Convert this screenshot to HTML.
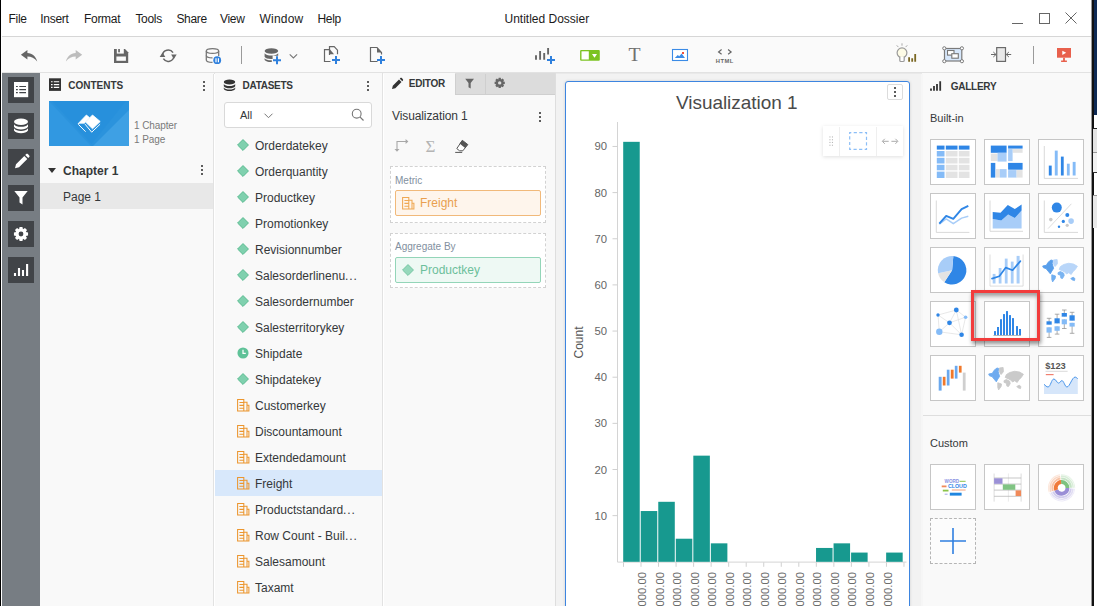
<!DOCTYPE html>
<html><head><meta charset="utf-8"><title>Untitled Dossier</title>
<style>
*{box-sizing:border-box;margin:0;padding:0}
html,body{width:1097px;height:606px;overflow:hidden;background:#fff}
body{position:relative;font-family:"Liberation Sans",sans-serif;color:#35383a;font-size:12px}
.abs,.abs-c>*{position:absolute}
svg{position:absolute;overflow:visible}
#menubar{position:absolute;left:2px;top:0;width:1089px;height:37px;background:#fff;border-bottom:1px solid #d6d6d6}
.mi{position:absolute;top:12.3px;font-size:12px;color:#1b1b1b;line-height:14px;white-space:nowrap;letter-spacing:-0.3px}
#toolbar{position:absolute;left:2px;top:37px;width:1089px;height:36px;background:#fafafa;border-bottom:1px solid #e2e2e2}
#strip{position:absolute;left:2px;top:74px;width:38px;height:532px;background:#777d83}
.sb{position:absolute;left:6px;width:26px;height:26px;background:#414448}
.panel{position:absolute;top:74px;height:532px;background:#f9f9f9}
.ph{position:absolute;font-weight:bold;font-size:10px;color:#35383a;line-height:12px;white-space:nowrap}
.keb{position:absolute;width:2px;height:2px;background:#5c5c5c;box-shadow:0 4px 0 #5c5c5c,0 8px 0 #5c5c5c}
.row{position:absolute;left:0;width:167px;height:26px}
.row span{position:absolute;left:40px;top:6px;font-size:12px;line-height:14px;color:#35383a;white-space:nowrap}
.row svg{left:22px;top:5.5px}
.tile{position:absolute;width:46px;height:46px;background:#fff;border:1px solid #c6c6c6}
.tile svg{left:0;top:0}
.lbl{position:absolute;font-size:10px;color:#8290a0;line-height:12px;white-space:nowrap}
.pill{position:absolute;left:11px;width:146px;height:26px;border-radius:2px}
.pill span{position:absolute;left:24px;top:5px;font-size:12px;line-height:14px}
.pill svg{left:6px;top:5.5px;opacity:.8}
.dash{position:absolute;left:6px;width:156px;border:1px dashed #d2d2d2;background:#fff}
</style></head><body>
<div class="abs" style="left:0;top:0;width:1px;height:606px;background:#000"></div>

<div id="menubar">
<span class="mi" style="left:6.5px">File</span>
<span class="mi" style="left:38.3px">Insert</span>
<span class="mi" style="left:82.0px">Format</span>
<span class="mi" style="left:133.4px">Tools</span>
<span class="mi" style="left:174.4px">Share</span>
<span class="mi" style="left:218.0px">View</span>
<span class="mi" style="left:257.6px;letter-spacing:.2px">Window</span>
<span class="mi" style="left:315.5px">Help</span>
<span class="mi" style="left:502.5px;letter-spacing:0px">Untitled Dossier</span>
<svg style="left:1009px;top:10px" width="70" height="16" viewBox="1011 10 70 16" fill="none" stroke="#666" stroke-width="1">
<path d="M1012 23.5h11"/><rect x="1039.5" y="13.5" width="10" height="10"/><path d="M1065.5 12.5l11 11M1076.5 12.5l-11 11"/></svg>
</div>
<div id="toolbar">

</div>
<div class="abs" style="left:2px;top:73px;width:38px;height:1px;background:#777d83"></div>
<div class="abs" style="left:40px;top:73px;width:516px;height:1px;background:#f9f9f9"></div>
<div class="abs" style="left:455px;top:73px;width:100px;height:1px;background:#dcdcdc"></div>
<div class="abs" style="left:556px;top:73px;width:366px;height:1px;background:#e9e9e9"></div>
<div class="abs" style="left:922px;top:73px;width:169px;height:1px;background:#f9f9f9"></div>
<div class="abs" style="left:214px;top:73px;width:1px;height:1px;background:#e2e2e2"></div>
<div class="abs" style="left:382px;top:73px;width:1px;height:1px;background:#e2e2e2"></div>
<div class="abs" style="left:555px;top:73px;width:1px;height:1px;background:#dedede"></div>

<div id="strip">
<div class="sb" style="top:3px"></div>
<div class="sb" style="top:39px"></div>
<div class="sb" style="top:75px"></div>
<div class="sb" style="top:111px"></div>
<div class="sb" style="top:147px"></div>
<div class="sb" style="top:183px"></div>
</div>
<div class="panel" style="left:40px;width:174px;border-right:1px solid #e2e2e2">

<span class="ph" id="h1" style="left:28.2px;top:6px;letter-spacing:0px">CONTENTS</span>
<div class="keb" style="left:163px;top:7px"></div>
<div class="abs" style="left:9px;top:27px;width:80px;height:45px;background:#2b93dd;overflow:hidden"><svg width="80" height="45" viewBox="49 101 80 45"><path d="M49 101L91 146H49z" fill="#3198e1"/><path d="M129 110L93 146h36z" fill="#3ea0e4"/><path d="M52 101h74L91.500 144z" fill="#2790dc"/><path d="M92.500 115l7.700 6.500l-7.700 7.300l-7-6.800z" fill="#fff" stroke="#fff" stroke-width=".8" stroke-linejoin="round"/><path d="M86.400 115l3 2.500l-4.400 5l-.4.700h-4.800l-1.700.5z" fill="#fff" stroke="#fff" stroke-width=".8" stroke-linejoin="round"/><path d="M78.300 124.300l7.300 7.400M85 124.100l6.700 8.100l8.400-8" fill="none" stroke="#fff" stroke-width="1"/></svg></div>
<span class="abs" style="left:94px;top:46px;font-size:10px;line-height:12px;color:#7a7a7a;letter-spacing:-.1px">1 Chapter</span>
<span class="abs" style="left:94px;top:60px;font-size:10px;line-height:12px;color:#7a7a7a;letter-spacing:-.1px">1 Page</span>
<svg style="left:8px;top:94px" width="8" height="6" viewBox="0 0 8 6"><path d="M0 0h8L4 5z" fill="#333"/></svg>
<span class="abs" style="left:23px;top:90px;font-size:12px;font-weight:bold;line-height:14px;color:#35383a">Chapter 1</span>
<div class="keb" style="left:161px;top:91px"></div>
<div class="abs" style="left:0;top:109px;width:173px;height:26px;background:#e8e8e8"></div>
<span class="abs" style="left:23px;top:116px;font-size:12px;line-height:14px;color:#35383a">Page 1</span>
</div>
<div class="panel" style="left:215px;width:168px;border-right:1px solid #e2e2e2">

<span class="ph" id="h2" style="left:27.6px;top:6px;letter-spacing:-.3px">DATASETS</span>
<div class="keb" style="left:152px;top:7px"></div>
<div class="abs" style="left:9px;top:28px;width:148px;height:26px;background:#fff;border:1px solid #d9d9d9;border-radius:3px"></div>
<span class="abs" style="left:25px;top:35px;font-size:11px;line-height:13px;color:#35383a">All</span>
<svg style="left:49px;top:39px" width="9" height="6" viewBox="0 0 9 6"><path d="M0.5 0.7L4.5 4.7L8.5 0.7" fill="none" stroke="#777" stroke-width="1"/></svg>
<svg style="left:136px;top:34px" width="14" height="14" viewBox="0 0 14 14"><circle cx="5.7" cy="5.7" r="4.4" fill="none" stroke="#777" stroke-width="1.1"/><path d="M8.9 8.9L12.5 12.5" stroke="#777" stroke-width="1.2"/></svg>
<div class="row" style="top:59px"><svg width="12" height="12" viewBox="0 0 13 13"><path d="M6.5 0.6L12.4 6.5L6.5 12.4L0.6 6.5z" fill="#7fd0ae" stroke="#52b78b" stroke-width="1"/></svg><span>Orderdatekey</span></div>
<div class="row" style="top:85px"><svg width="12" height="12" viewBox="0 0 13 13"><path d="M6.5 0.6L12.4 6.5L6.5 12.4L0.6 6.5z" fill="#7fd0ae" stroke="#52b78b" stroke-width="1"/></svg><span>Orderquantity</span></div>
<div class="row" style="top:111px"><svg width="12" height="12" viewBox="0 0 13 13"><path d="M6.5 0.6L12.4 6.5L6.5 12.4L0.6 6.5z" fill="#7fd0ae" stroke="#52b78b" stroke-width="1"/></svg><span>Productkey</span></div>
<div class="row" style="top:137px"><svg width="12" height="12" viewBox="0 0 13 13"><path d="M6.5 0.6L12.4 6.5L6.5 12.4L0.6 6.5z" fill="#7fd0ae" stroke="#52b78b" stroke-width="1"/></svg><span>Promotionkey</span></div>
<div class="row" style="top:163px"><svg width="12" height="12" viewBox="0 0 13 13"><path d="M6.5 0.6L12.4 6.5L6.5 12.4L0.6 6.5z" fill="#7fd0ae" stroke="#52b78b" stroke-width="1"/></svg><span>Revisionnumber</span></div>
<div class="row" style="top:189px"><svg width="12" height="12" viewBox="0 0 13 13"><path d="M6.5 0.6L12.4 6.5L6.5 12.4L0.6 6.5z" fill="#7fd0ae" stroke="#52b78b" stroke-width="1"/></svg><span>Salesorderlinenu<i style="font-style:normal;letter-spacing:.9px">...</i></span></div>
<div class="row" style="top:215px"><svg width="12" height="12" viewBox="0 0 13 13"><path d="M6.5 0.6L12.4 6.5L6.5 12.4L0.6 6.5z" fill="#7fd0ae" stroke="#52b78b" stroke-width="1"/></svg><span>Salesordernumber</span></div>
<div class="row" style="top:241px"><svg width="12" height="12" viewBox="0 0 13 13"><path d="M6.5 0.6L12.4 6.5L6.5 12.4L0.6 6.5z" fill="#7fd0ae" stroke="#52b78b" stroke-width="1"/></svg><span>Salesterritorykey</span></div>
<div class="row" style="top:267px"><svg width="12" height="12" viewBox="0 0 13 13"><circle cx="6.5" cy="6.5" r="6" fill="#5fc298"/><path d="M6.5 3v4h3" fill="none" stroke="#fff" stroke-width="1.3"/></svg><span>Shipdate</span></div>
<div class="row" style="top:293px"><svg width="12" height="12" viewBox="0 0 13 13"><path d="M6.5 0.6L12.4 6.5L6.5 12.4L0.6 6.5z" fill="#7fd0ae" stroke="#52b78b" stroke-width="1"/></svg><span>Shipdatekey</span></div>
<div class="row" style="top:319px"><svg width="12.5" height="12.7" viewBox="0 0 12.5 12.7" fill="none" stroke="#ec962e" stroke-width="1.05"><path d="M.6 .6H6.8V12.1H.6zM6.8 3.3H10V12.1M10 6.3H11.9V12.1H6.8M2.4 3.5H6.8M2.4 6.4H6.8M2.4 9.3H6.8"/></svg><span>Customerkey</span></div>
<div class="row" style="top:345px"><svg width="12.5" height="12.7" viewBox="0 0 12.5 12.7" fill="none" stroke="#ec962e" stroke-width="1.05"><path d="M.6 .6H6.8V12.1H.6zM6.8 3.3H10V12.1M10 6.3H11.9V12.1H6.8M2.4 3.5H6.8M2.4 6.4H6.8M2.4 9.3H6.8"/></svg><span>Discountamount</span></div>
<div class="row" style="top:371px"><svg width="12.5" height="12.7" viewBox="0 0 12.5 12.7" fill="none" stroke="#ec962e" stroke-width="1.05"><path d="M.6 .6H6.8V12.1H.6zM6.8 3.3H10V12.1M10 6.3H11.9V12.1H6.8M2.4 3.5H6.8M2.4 6.4H6.8M2.4 9.3H6.8"/></svg><span>Extendedamount</span></div>
<div class="abs" style="left:0;top:396px;width:167px;height:26px;background:#d8e8fb"></div>
<div class="row" style="top:397px"><svg width="12.5" height="12.7" viewBox="0 0 12.5 12.7" fill="none" stroke="#ec962e" stroke-width="1.05"><path d="M.6 .6H6.8V12.1H.6zM6.8 3.3H10V12.1M10 6.3H11.9V12.1H6.8M2.4 3.5H6.8M2.4 6.4H6.8M2.4 9.3H6.8"/></svg><span>Freight</span></div>
<div class="row" style="top:423px"><svg width="12.5" height="12.7" viewBox="0 0 12.5 12.7" fill="none" stroke="#ec962e" stroke-width="1.05"><path d="M.6 .6H6.8V12.1H.6zM6.8 3.3H10V12.1M10 6.3H11.9V12.1H6.8M2.4 3.5H6.8M2.4 6.4H6.8M2.4 9.3H6.8"/></svg><span>Productstandard<i style="font-style:normal;letter-spacing:.9px">...</i></span></div>
<div class="row" style="top:449px"><svg width="12.5" height="12.7" viewBox="0 0 12.5 12.7" fill="none" stroke="#ec962e" stroke-width="1.05"><path d="M.6 .6H6.8V12.1H.6zM6.8 3.3H10V12.1M10 6.3H11.9V12.1H6.8M2.4 3.5H6.8M2.4 6.4H6.8M2.4 9.3H6.8"/></svg><span>Row Count - Buil<i style="font-style:normal;letter-spacing:.9px">...</i></span></div>
<div class="row" style="top:475px"><svg width="12.5" height="12.7" viewBox="0 0 12.5 12.7" fill="none" stroke="#ec962e" stroke-width="1.05"><path d="M.6 .6H6.8V12.1H.6zM6.8 3.3H10V12.1M10 6.3H11.9V12.1H6.8M2.4 3.5H6.8M2.4 6.4H6.8M2.4 9.3H6.8"/></svg><span>Salesamount</span></div>
<div class="row" style="top:501px"><svg width="12.5" height="12.7" viewBox="0 0 12.5 12.7" fill="none" stroke="#ec962e" stroke-width="1.05"><path d="M.6 .6H6.8V12.1H.6zM6.8 3.3H10V12.1M10 6.3H11.9V12.1H6.8M2.4 3.5H6.8M2.4 6.4H6.8M2.4 9.3H6.8"/></svg><span>Taxamt</span></div>
</div>
<div class="panel" style="left:384px;width:172px;border-right:1px solid #dedede">
<div class="abs" style="left:71px;top:0;width:100px;height:21px;background:#dcdcdc;border-bottom:1px solid #cfcfcf;border-left:1px solid #cfcfcf"></div>
<div class="abs" style="left:101px;top:0;width:1px;height:21px;background:#cfcfcf"></div>

<span class="ph" id="h3" style="left:24.7px;top:4px;letter-spacing:-.2px">EDITOR</span>
<span class="abs" style="left:8px;top:35px;font-size:12px;line-height:14px;color:#35383a;letter-spacing:-.1px">Visualization 1</span>
<div class="keb" style="left:155px;top:38px"></div>
<div class="dash" style="top:92px;height:57px"></div>
<span class="lbl" style="left:11px;top:100.5px">Metric</span>
<div class="pill" style="top:116px;background:#fef5ec;border:1px solid #f1b97a"><svg width="12.5" height="12.7" viewBox="0 0 12.5 12.7" fill="none" stroke="#ec962e" stroke-width="1.05"><path d="M.6 .6H6.8V12.1H.6zM6.8 3.3H10V12.1M10 6.3H11.9V12.1H6.8M2.4 3.5H6.8M2.4 6.4H6.8M2.4 9.3H6.8"/></svg><span style="color:#e9a04f">Freight</span></div>
<div class="dash" style="top:159px;height:55px"></div>
<span class="lbl" style="left:11px;top:167px">Aggregate By</span>
<div class="pill" style="top:183px;background:#eef9f4;border:1px solid #93d5b8"><svg width="12" height="12" viewBox="0 0 13 13"><path d="M6.5 0.6L12.4 6.5L6.5 12.4L0.6 6.5z" fill="#7fd0ae" stroke="#52b78b" stroke-width="1"/></svg><span style="color:#6cc09b">Productkey</span></div>
</div>
<div class="abs" style="left:556px;top:74px;width:366px;height:532px;background:#f2f2f2"></div>
<div class="abs" style="left:565px;top:81px;width:345px;height:540px;background:#fff;border:1px solid #3d85e0;border-radius:3px;box-shadow:0 0 3px rgba(0,0,0,.15)"></div>
<span class="abs" style="left:676px;top:92px;font-size:19px;line-height:22px;color:#4a4a4a;white-space:nowrap;letter-spacing:-.05px">Visualization 1</span>
<div class="abs" style="left:887px;top:84px;width:16px;height:16px;background:#fff;border:1px solid #dcdcdc;border-radius:2px"></div>
<div class="keb" style="left:894px;top:87px"></div>
<div class="abs" style="left:823px;top:126px;width:80px;height:30px;background:#fff;box-shadow:0 1px 4px rgba(0,0,0,.13)"></div>
<svg style="left:0;top:0" width="1097" height="606" viewBox="0 0 1097 606"><path d="M839.500 127v29M876.500 127v29" stroke="#efefef" stroke-width="1"/><g fill="#b8b8b8"><rect x="829.400" y="136.400" width="1.100" height="1.100"/><rect x="831.900" y="136.400" width="1.100" height="1.100"/><rect x="829.400" y="139.200" width="1.100" height="1.100"/><rect x="831.900" y="139.200" width="1.100" height="1.100"/><rect x="829.400" y="141.900" width="1.100" height="1.100"/><rect x="831.900" y="141.900" width="1.100" height="1.100"/><rect x="829.400" y="144.700" width="1.100" height="1.100"/><rect x="831.900" y="144.700" width="1.100" height="1.100"/></g><rect x="849.700" y="132.700" width="16.800" height="16.600" fill="none" stroke="#8cbef7" stroke-width="1.200" stroke-dasharray="3.200 2.400" stroke-dashoffset="1.600"/><path d="M888.700 141.300h-6M884.800 138.800l-2.500 2.500l2.500 2.500M891.400 141.300h6M895.400 138.800l2.500 2.500l-2.500 2.500" fill="none" stroke="#ababab" stroke-width="1"/></svg>
<svg style="left:0;top:0" width="1097" height="606" viewBox="0 0 1097 606"><path d="M617.5 122V562.0999999999999H906.5" fill="none" stroke="#d4d4d4" stroke-width="1"/><rect x="623.20" y="141.83" width="16.53" height="419.97" fill="#17998f"/><rect x="640.73" y="511.03" width="16.53" height="50.77" fill="#17998f"/><rect x="658.26" y="501.80" width="16.53" height="60.00" fill="#17998f"/><rect x="675.79" y="538.72" width="16.53" height="23.08" fill="#17998f"/><rect x="693.32" y="455.65" width="16.53" height="106.15" fill="#17998f"/><rect x="710.85" y="543.34" width="16.53" height="18.46" fill="#17998f"/><rect x="816.03" y="547.95" width="16.53" height="13.85" fill="#17998f"/><rect x="833.56" y="543.34" width="16.53" height="18.46" fill="#17998f"/><rect x="851.09" y="552.57" width="16.53" height="9.23" fill="#17998f"/><rect x="886.15" y="552.57" width="16.53" height="9.23" fill="#17998f"/><path d="M623.50 562.3v4.5M641.03 562.3v4.5M658.56 562.3v4.5M676.09 562.3v4.5M693.62 562.3v4.5M711.15 562.3v4.5M728.68 562.3v4.5M746.21 562.3v4.5M763.74 562.3v4.5M781.27 562.3v4.5M798.80 562.3v4.5M816.33 562.3v4.5M833.86 562.3v4.5M851.39 562.3v4.5M868.92 562.3v4.5M886.45 562.3v4.5M903.98 562.3v4.5M612.5 515.65h5M612.5 469.50h5M612.5 423.35h5M612.5 377.20h5M612.5 331.05h5M612.5 284.90h5M612.5 238.75h5M612.5 192.60h5M612.5 146.45h5" stroke="#d0d0d0" stroke-width="1" fill="none"/><text x="607" y="519.6" text-anchor="end" font-size="11.3" fill="#666">10</text><text x="607" y="473.5" text-anchor="end" font-size="11.3" fill="#666">20</text><text x="607" y="427.3" text-anchor="end" font-size="11.3" fill="#666">30</text><text x="607" y="381.2" text-anchor="end" font-size="11.3" fill="#666">40</text><text x="607" y="335.0" text-anchor="end" font-size="11.3" fill="#666">50</text><text x="607" y="288.9" text-anchor="end" font-size="11.3" fill="#666">60</text><text x="607" y="242.7" text-anchor="end" font-size="11.3" fill="#666">70</text><text x="607" y="196.6" text-anchor="end" font-size="11.3" fill="#666">80</text><text x="607" y="150.4" text-anchor="end" font-size="11.3" fill="#666">90</text><text transform="translate(583.4,342.5) rotate(-90)" text-anchor="middle" font-size="12" fill="#555">Count</text><text transform="translate(646.0,572) rotate(-90)" text-anchor="end" font-size="11.3" fill="#6c6c6c">1,000,000.00</text><text transform="translate(663.6,572) rotate(-90)" text-anchor="end" font-size="11.3" fill="#6c6c6c">2,000,000.00</text><text transform="translate(681.1,572) rotate(-90)" text-anchor="end" font-size="11.3" fill="#6c6c6c">3,000,000.00</text><text transform="translate(698.6,572) rotate(-90)" text-anchor="end" font-size="11.3" fill="#6c6c6c">4,000,000.00</text><text transform="translate(716.1,572) rotate(-90)" text-anchor="end" font-size="11.3" fill="#6c6c6c">5,000,000.00</text><text transform="translate(733.7,572) rotate(-90)" text-anchor="end" font-size="11.3" fill="#6c6c6c">6,000,000.00</text><text transform="translate(751.2,572) rotate(-90)" text-anchor="end" font-size="11.3" fill="#6c6c6c">7,000,000.00</text><text transform="translate(768.7,572) rotate(-90)" text-anchor="end" font-size="11.3" fill="#6c6c6c">8,000,000.00</text><text transform="translate(786.3,572) rotate(-90)" text-anchor="end" font-size="11.3" fill="#6c6c6c">9,000,000.00</text><text transform="translate(803.8,572) rotate(-90)" text-anchor="end" font-size="11.3" fill="#6c6c6c">10,000,000.00</text><text transform="translate(821.3,572) rotate(-90)" text-anchor="end" font-size="11.3" fill="#6c6c6c">11,000,000.00</text><text transform="translate(838.9,572) rotate(-90)" text-anchor="end" font-size="11.3" fill="#6c6c6c">12,000,000.00</text><text transform="translate(856.4,572) rotate(-90)" text-anchor="end" font-size="11.3" fill="#6c6c6c">13,000,000.00</text><text transform="translate(873.9,572) rotate(-90)" text-anchor="end" font-size="11.3" fill="#6c6c6c">14,000,000.00</text><text transform="translate(891.5,572) rotate(-90)" text-anchor="end" font-size="11.3" fill="#6c6c6c">15,000,000.00</text></svg>
<div class="abs" style="left:921px;top:74px;width:2px;height:532px;background:#f6f6f6"></div>
<div class="panel" style="left:923px;width:168px">

<span class="ph" id="h4" style="left:27.7px;top:7px;letter-spacing:-.25px">GALLERY</span>
<span class="abs" style="left:7px;top:38px;font-size:11px;line-height:13px;color:#35383a">Built-in</span>
<div class="tile" style="left:7px;top:65px"><svg width="44" height="44" viewBox="1 1 44 44"><rect x="6.8" y="6.6" width="7.7" height="4.0" fill="#2f86e6"/><rect x="15.8" y="6.6" width="11.7" height="4.0" fill="#2f86e6"/><rect x="28.8" y="6.6" width="10.7" height="4.0" fill="#2f86e6"/><rect x="6.8" y="12.0" width="7.7" height="5.5" fill="#84bbf7"/><rect x="15.8" y="12.0" width="11.7" height="5.5" fill="#e3e3e3"/><rect x="28.8" y="12.0" width="10.7" height="5.5" fill="#e3e3e3"/><rect x="6.8" y="18.8" width="7.7" height="5.7" fill="#84bbf7"/><rect x="15.8" y="18.8" width="11.7" height="5.7" fill="#e3e3e3"/><rect x="28.8" y="18.8" width="10.7" height="5.7" fill="#e3e3e3"/><rect x="6.8" y="25.8" width="7.7" height="5.5" fill="#84bbf7"/><rect x="15.8" y="25.8" width="11.7" height="5.5" fill="#e3e3e3"/><rect x="28.8" y="25.8" width="10.7" height="5.5" fill="#e3e3e3"/><rect x="6.8" y="32.6" width="7.7" height="6.4" fill="#84bbf7"/><rect x="15.8" y="32.6" width="11.7" height="6.4" fill="#e3e3e3"/><rect x="28.8" y="32.6" width="10.7" height="6.4" fill="#e3e3e3"/></svg></div>
<div class="tile" style="left:61px;top:65px"><svg width="44" height="44" viewBox="1 1 44 44"><rect x="6.8" y="6.6" width="15.8" height="7.2" fill="#2f86e6"/><rect x="24.1" y="6.6" width="14.5" height="3.0" fill="#2f86e6"/><rect x="28.6" y="10.1" width="10.0" height="3.7" fill="#e3e3e3"/><rect x="24.1" y="10.1" width="4.5" height="12.0" fill="#a8cdf8"/><rect x="6.8" y="14.6" width="6.7" height="7.5" fill="#e3e3e3"/><rect x="13.5" y="13.8" width="9.1" height="8.8" fill="#a8cdf8"/><rect x="6.8" y="23.9" width="4.5" height="14.7" fill="#2f86e6"/><rect x="12.0" y="30.1" width="3.8" height="8.5" fill="#e3e3e3"/><rect x="15.8" y="30.1" width="6.8" height="8.5" fill="#a8cdf8"/><rect x="24.1" y="23.9" width="14.5" height="6.8" fill="#2f86e6"/><rect x="24.1" y="31.1" width="8.5" height="7.5" fill="#a8cdf8"/><rect x="32.6" y="31.1" width="6.0" height="7.5" fill="#e3e3e3"/></svg></div>
<div class="tile" style="left:115px;top:65px"><svg width="44" height="44" viewBox="1 1 44 44"><path d="M6.3 7V39.4H40" fill="none" stroke="#cfcfcf" stroke-width=".8"/><rect x="10.8" y="26.6" width="2.9" height="9.9" fill="#2f86e6"/><rect x="16.8" y="11.6" width="2.9" height="24.9" fill="#84bbf7"/><rect x="22.9" y="17.6" width="2.8" height="18.9" fill="#2f86e6"/><rect x="28.9" y="24.7" width="2.8" height="11.8" fill="#84bbf7"/><rect x="34.7" y="22.9" width="2.9" height="13.6" fill="#84bbf7"/></svg></div>
<div class="tile" style="left:7px;top:119px"><svg width="44" height="44" viewBox="1 1 44 44"><path d="M6.3 7.5V39.4H39.4" fill="none" stroke="#cfcfcf" stroke-width=".8"/><path d="M9.3 31.1L16.2 25.9L23.3 30.7L31.6 25.1L38.3 23.3" fill="none" stroke="#a8cdf8" stroke-width="1.5" stroke-linejoin="round"/><path d="M9.3 30.7L16.2 22.9L23.3 25.9L31.6 16.1L38.3 12.8" fill="none" stroke="#2f86e6" stroke-width="1.9" stroke-linejoin="round"/></svg></div>
<div class="tile" style="left:61px;top:119px"><svg width="44" height="44" viewBox="1 1 44 44"><path d="M6 7.5V38.3H39" fill="none" stroke="#cfcfcf" stroke-width=".8"/><path d="M8.7 25.9L17.3 27.4L24.1 21.4L30.8 25.1L37.6 17.6V35.6H8.7z" fill="#a8cdf8"/><path d="M8.7 19.1L16.5 19.8L23.8 12L30.8 16.1L37.6 11.6V17.6L30.8 25.1L24.1 21.4L17.3 27.4L8.7 25.9z" fill="#2f86e6"/></svg></div>
<div class="tile" style="left:115px;top:119px"><svg width="44" height="44" viewBox="1 1 44 44"><path d="M6.3 7.5V39.4H40" fill="none" stroke="#cfcfcf" stroke-width=".8"/><path d="M10.1 35.6L33.4 10.8" stroke="#c4c4c4" stroke-width=".6"/><circle cx="18.8" cy="14.6" r="5" fill="#2f86e6"/><circle cx="12.8" cy="26.6" r="1.8" fill="#c9c9c9"/><circle cx="29.3" cy="22.1" r="2" fill="#2f86e6"/><circle cx="25.3" cy="28.4" r="1.6" fill="#2f86e6"/><circle cx="33.1" cy="28.1" r="2.8" fill="#a8cdf8"/><circle cx="29.2" cy="32.3" r="1.6" fill="#c9c9c9"/><circle cx="21" cy="33.8" r="1.2" fill="#2f86e6"/></svg></div>
<div class="tile" style="left:7px;top:173px"><svg width="44" height="44" viewBox="1 1 44 44"><path d="M22.1 23.2L23.35 8.95A14.3 14.3 0 1 1 14.31 35.19z" fill="#2f86e6"/><path d="M22.1 23.2L14.31 35.19A14.3 14.3 0 0 1 8.11 26.17z" fill="#e3e3e3"/><path d="M22.1 23.2L8.11 26.17A14.3 14.3 0 0 1 23.35 8.95z" fill="#a8cdf8"/></svg></div>
<div class="tile" style="left:61px;top:173px"><svg width="44" height="44" viewBox="1 1 44 44"><path d="M6 7.5V39.1H39.1V7.5" fill="none" stroke="#cfcfcf" stroke-width=".7"/><rect x="8.7" y="26.9" width="2.8" height="9.6" fill="#a8cdf8"/><rect x="14.7" y="21.0" width="2.8" height="15.5" fill="#a8cdf8"/><rect x="20.8" y="11.6" width="2.8" height="24.9" fill="#a8cdf8"/><rect x="26.8" y="14.6" width="2.8" height="21.9" fill="#a8cdf8"/><rect x="32.6" y="8.9" width="3.0" height="27.6" fill="#a8cdf8"/><path d="M8 31.6L15.3 29.2L21.8 20.6L28.6 23.2L36.4 14.1" fill="none" stroke="#2f86e6" stroke-width="1.7" stroke-linejoin="round" stroke-linecap="round"/></svg></div>
<div class="tile" style="left:115px;top:173px"><svg width="44" height="44" viewBox="1 1 44 44"><path d="M4.7 19L8.4 18.3L10 15.4L13 13L14.6 13.4L14.2 16.7L15.6 21.4L13.8 24.1L12.3 26.8L10.1 24.1L8 21.6L5.5 20.8z" fill="#2f86e6" stroke="#2f86e6" stroke-width=".9" stroke-linejoin="round" opacity=".8"/><path d="M15.4 13L19.1 12.5L19.4 16.7L17.1 19.5L15.4 16.7z" fill="#a8cdf8" stroke="#a8cdf8" stroke-width=".9" stroke-linejoin="round" opacity=".8"/><path d="M13.8 27.8L17.5 29L17.1 31.5L14.6 34.9L13.8 32.3z" fill="#4d9aec" stroke="#4d9aec" stroke-width=".9" stroke-linejoin="round" opacity=".8"/><path d="M20 25.7L22.4 24.5L25.7 26.2L26.2 28.6L24.5 31.5L22.9 31.1L22.4 28.2L20.1 27.4z" fill="#5aa2ee" stroke="#5aa2ee" stroke-width=".9" stroke-linejoin="round" opacity=".8"/><path d="M21.2 22.4L22.4 19.6L25.7 17.5L30.7 16.3L35.6 17.1L39.4 19.3L37.3 22.4L34.8 24.9L33.2 27.4L30.7 25.7L28.6 27L26.6 24.9L24.1 23.7z" fill="#a8cdf8" stroke="#a8cdf8" stroke-width=".9" stroke-linejoin="round" opacity=".8"/><path d="M32.8 31.5L35.2 30.3L36.9 31.5L36.5 33.6L34 32.8z" fill="#4d9aec" stroke="#4d9aec" stroke-width=".9" stroke-linejoin="round" opacity=".8"/></svg></div>
<div class="tile" style="left:7px;top:227px"><svg width="44" height="44" viewBox="1 1 44 44"><path d="M26.3 9L8 14" stroke="#dedede" stroke-width=".7"/><path d="M26.3 9L35.6 16.2" stroke="#dedede" stroke-width=".7"/><path d="M26.3 9L19.5 21.8" stroke="#dedede" stroke-width=".7"/><path d="M26.3 9L31.6 33.8" stroke="#dedede" stroke-width=".7"/><path d="M8 14L19.5 21.8" stroke="#dedede" stroke-width=".7"/><path d="M8 14L9.3 30.8" stroke="#dedede" stroke-width=".7"/><path d="M35.6 16.2L19.5 21.8" stroke="#dedede" stroke-width=".7"/><path d="M35.6 16.2L31.6 33.8" stroke="#dedede" stroke-width=".7"/><path d="M19.5 21.8L9.3 30.8" stroke="#dedede" stroke-width=".7"/><path d="M19.5 21.8L31.6 33.8" stroke="#dedede" stroke-width=".7"/><path d="M9.3 30.8L31.6 33.8" stroke="#dedede" stroke-width=".7"/><circle cx="26.3" cy="9" r="2.4" fill="#2f86e6"/><circle cx="8" cy="14" r="1.7" fill="#2f86e6"/><circle cx="35.6" cy="16.2" r="1.8" fill="#84bbf7"/><circle cx="19.5" cy="21.8" r="2.4" fill="#2f86e6"/><circle cx="9.3" cy="30.8" r="3.2" fill="#84bbf7"/><circle cx="31.6" cy="33.8" r="2.3" fill="#2f86e6"/></svg></div>
<div class="tile" style="left:61px;top:227px"><svg width="44" height="44" viewBox="1 1 44 44"><path d="M9.4 34.5H37" stroke="#aaa" stroke-width=".8"/><rect x="10.0" y="30.1" width="2.0" height="4.0" fill="#2f86e6"/><rect x="13.0" y="26.0" width="2.0" height="8.1" fill="#2f86e6"/><rect x="16.0" y="18.2" width="2.0" height="15.9" fill="#2f86e6"/><rect x="19.0" y="13.1" width="2.0" height="21.0" fill="#2f86e6"/><rect x="22.0" y="10.1" width="2.0" height="24.0" fill="#2f86e6"/><rect x="25.0" y="14.1" width="2.0" height="20.0" fill="#2f86e6"/><rect x="28.0" y="17.1" width="2.0" height="17.0" fill="#2f86e6"/><rect x="32.0" y="25.1" width="2.0" height="9.0" fill="#2f86e6"/><rect x="35.0" y="28.0" width="2.0" height="6.1" fill="#2f86e6"/></svg></div>
<div class="tile" style="left:115px;top:227px"><svg width="44" height="44" viewBox="1 1 44 44"><path d="M11.1 17.3V36.4M8.8 17.3h4.6M8.8 36.4h4.6" stroke="#8a8a8a" stroke-width=".7" fill="none"/><rect x="8.5" y="20.3" width="5.2" height="3.5" fill="#2f86e6"/><rect x="8.5" y="23.8" width="5.2" height="2.5" fill="#fff"/><rect x="8.5" y="26.3" width="5.2" height="5.3" fill="#84bbf7"/><path d="M19.1 13.2V33.1M16.8 13.2h4.6M16.8 33.1h4.6" stroke="#8a8a8a" stroke-width=".7" fill="none"/><rect x="16.5" y="17.3" width="5.2" height="5.3" fill="#2f86e6"/><rect x="16.5" y="22.6" width="5.2" height="2.7" fill="#fff"/><rect x="16.5" y="25.3" width="5.2" height="4.5" fill="#84bbf7"/><path d="M26.3 9V27.5M24.0 9h4.6M24.0 27.5h4.6" stroke="#8a8a8a" stroke-width=".7" fill="none"/><rect x="23.7" y="12.0" width="5.2" height="3.8" fill="#2f86e6"/><rect x="23.7" y="15.8" width="5.2" height="2.5" fill="#fff"/><rect x="23.7" y="18.3" width="5.2" height="5.0" fill="#84bbf7"/><path d="M34.1 11.3V32.3M31.8 11.3h4.6M31.8 32.3h4.6" stroke="#8a8a8a" stroke-width=".7" fill="none"/><rect x="31.5" y="14.3" width="5.2" height="5.5" fill="#2f86e6"/><rect x="31.5" y="19.8" width="5.2" height="2.0" fill="#fff"/><rect x="31.5" y="21.8" width="5.2" height="3.8" fill="#84bbf7"/></svg></div>
<div class="tile" style="left:7px;top:281px"><svg width="44" height="44" viewBox="1 1 44 44"><rect x="8.7" y="21.8" width="2.9" height="13.8" fill="#6aa8ee"/><rect x="12.8" y="21.8" width="2.7" height="8.7" fill="#f0782a"/><rect x="16.8" y="14.7" width="2.7" height="15.8" fill="#6aa8ee"/><rect x="20.8" y="14.7" width="2.8" height="8.9" fill="#f0782a"/><rect x="24.8" y="10.8" width="2.7" height="12.8" fill="#6aa8ee"/><rect x="28.9" y="10.8" width="2.7" height="6.8" fill="#f0782a"/><rect x="32.8" y="17.6" width="2.8" height="18.0" fill="#cfcfcf"/></svg></div>
<div class="tile" style="left:61px;top:281px"><svg width="44" height="44" viewBox="1 1 44 44"><path d="M4.7 19L8.4 18.3L10 15.4L13 13L14.6 13.4L14.2 16.7L15.6 21.4L13.8 24.1L12.3 26.8L10.1 24.1L8 21.6L5.5 20.8z" fill="#4a96ec" stroke="#4a96ec" stroke-width=".9" stroke-linejoin="round" opacity=".8"/><path d="M15.4 13L19.1 12.5L19.4 16.7L17.1 19.5L15.4 16.7z" fill="#bdbdbd" stroke="#bdbdbd" stroke-width=".9" stroke-linejoin="round" opacity=".8"/><path d="M13.8 27.8L17.5 29L17.1 31.5L14.6 34.9L13.8 32.3z" fill="#bdbdbd" stroke="#bdbdbd" stroke-width=".9" stroke-linejoin="round" opacity=".8"/><path d="M20 25.7L22.4 24.5L25.7 26.2L26.2 28.6L24.5 31.5L22.9 31.1L22.4 28.2L20.1 27.4z" fill="#bdbdbd" stroke="#bdbdbd" stroke-width=".9" stroke-linejoin="round" opacity=".8"/><path d="M21.2 22.4L22.4 19.6L25.7 17.5L30.7 16.3L35.6 17.1L39.4 19.3L37.3 22.4L34.8 24.9L33.2 27.4L30.7 25.7L28.6 27L26.6 24.9L24.1 23.7z" fill="#bdbdbd" stroke="#bdbdbd" stroke-width=".9" stroke-linejoin="round" opacity=".8"/><path d="M32.8 31.5L35.2 30.3L36.9 31.5L36.5 33.6L34 32.8z" fill="#bdbdbd" stroke="#bdbdbd" stroke-width=".9" stroke-linejoin="round" opacity=".8"/></svg></div>
<div class="tile" style="left:115px;top:281px"><svg width="44" height="44" viewBox="1 1 44 44"><text x="7.300" y="13.800" font-size="9.300" font-weight="bold" fill="#555" letter-spacing="-.1">$123</text><path d="M7.500 16.300H29.600" stroke="#c8c8c8" stroke-width=".7"/><path d="M7.800 19.600H15.600" stroke="#f08070" stroke-width="1.200"/><path d="M6 29.300C7.500 30.500 8.500 32 10 32C12.500 32 13.500 24 15.800 24C18 24 18.800 28.100 20.600 28.100C22 28.100 22.600 25.600 23.900 25.600C25.800 25.600 27 32 28.900 32C31.800 32 34 22.100 37.100 22.100C38.200 22.100 39 23 39.800 24V39.100H6z" fill="#d6e6fa"/><path d="M6 29.300C7.500 30.500 8.500 32 10 32C12.500 32 13.500 24 15.800 24C18 24 18.800 28.100 20.600 28.100C22 28.100 22.600 25.600 23.900 25.600C25.800 25.600 27 32 28.900 32C31.800 32 34 22.100 37.100 22.100C38.200 22.100 39 23 39.800 24" fill="none" stroke="#4a96ec" stroke-width="1"/></svg></div>
<div class="abs" style="left:0;top:341px;width:168px;height:1px;background:#dedede"></div>
<span class="abs" style="left:7px;top:363px;font-size:11px;line-height:13px;color:#35383a">Custom</span>
<div class="tile" style="left:7px;top:390px"><svg width="44" height="44" viewBox="1 1 44 44"><text x="14.600" y="18.600" font-size="4.600" font-weight="bold" fill="#8a90e2">WORD</text><path d="M29.600 17.300H35.600" stroke="#8bc34a" stroke-width="1"/><rect x="11.7" y="21.5" width="4.8" height="1.8" fill="#f08a5a"/><text x="17.900" y="23.900" font-size="5.300" font-weight="bold" fill="#2f86e6">CLOUD</text><rect x="12.8" y="25.7" width="5.7" height="1.8" fill="#8bc34a"/><path d="M21.800 26H35.600" stroke="#f08a5a" stroke-width=".8"/><path d="M14.700 30.200H17.600" stroke="#8a90e2" stroke-width=".8"/><rect x="19.8" y="28.7" width="11.8" height="2.9" fill="#1f86e0"/></svg></div>
<div class="tile" style="left:61px;top:390px"><svg width="44" height="44" viewBox="1 1 44 44"><path d="M10.100 9.500V37.600M37.100 9.500V37.600" stroke="#c4c4c4" stroke-width=".6"/><path d="M24.400 9.500V37.600" stroke="#dcdcdc" stroke-width=".6"/><path d="M10.100 14H37.100M10.100 20.100H37.100M10.100 26.100H37.100M10.100 32.300H37.100" stroke="#b0b0b0" stroke-width=".7"/><rect x="10.1" y="14.3" width="8.4" height="5.5" fill="#9b90d6"/><rect x="18.8" y="20.4" width="12.5" height="5.4" fill="#80c483"/><rect x="31.6" y="26.4" width="5.5" height="5.6" fill="#f08a5a"/></svg></div>
<div class="tile" style="left:115px;top:390px"><svg width="44" height="44" viewBox="1 1 44 44"><path d="M22.92 16.03A7.8 7.8 0 0 1 31.40 24.07L27.50 23.94A3.9 3.9 0 0 0 23.26 19.91z" fill="#7ec27f" fill-opacity="1"/><path d="M23.06 13.51A10.3 10.3 0 0 1 33.90 23.80L31.90 23.80A8.3 8.3 0 0 0 23.17 15.51z" fill="#7ec27f" fill-opacity="0.45"/><path d="M22.96 11.62A12.2 12.2 0 0 1 35.80 23.80L34.30 23.80A10.7 10.7 0 0 0 23.04 13.11z" fill="#7ec27f" fill-opacity="0.3"/><path d="M22.89 10.22A13.6 13.6 0 0 1 37.20 23.80L36.20 23.80A12.6 12.6 0 0 0 22.94 11.22z" fill="#7ec27f" fill-opacity="0.18"/><path d="M31.40 24.07A7.8 7.8 0 0 1 16.37 26.72L19.98 25.26A3.9 3.9 0 0 0 27.50 23.94z" fill="#9a8ed6" fill-opacity="1"/><path d="M33.87 24.52A10.3 10.3 0 0 1 14.19 27.99L16.02 27.18A8.3 8.3 0 0 0 31.88 24.38z" fill="#9a8ed6" fill-opacity="0.45"/><path d="M35.77 24.65A12.2 12.2 0 0 1 12.45 28.76L13.83 28.15A10.7 10.7 0 0 0 34.27 24.55z" fill="#9a8ed6" fill-opacity="0.3"/><path d="M37.17 24.75A13.6 13.6 0 0 1 11.18 29.33L12.09 28.92A12.6 12.6 0 0 0 36.17 24.68z" fill="#9a8ed6" fill-opacity="0.18"/><path d="M16.37 26.72A7.8 7.8 0 0 1 22.92 16.03L23.26 19.91A3.9 3.9 0 0 0 19.98 25.26z" fill="#f07a3a" fill-opacity="1"/><path d="M13.92 27.32A10.3 10.3 0 0 1 22.34 13.58L22.59 15.56A8.3 8.3 0 0 0 15.80 26.64z" fill="#f07a3a" fill-opacity="0.45"/><path d="M12.14 27.97A12.2 12.2 0 0 1 22.11 11.69L22.30 13.18A10.7 10.7 0 0 0 13.55 27.46z" fill="#f07a3a" fill-opacity="0.3"/><path d="M10.82 28.45A13.6 13.6 0 0 1 21.94 10.30L22.06 11.29A12.6 12.6 0 0 0 11.76 28.11z" fill="#f07a3a" fill-opacity="0.18"/></svg></div>
<div class="tile" style="left:7px;top:444px;border:1px dashed #b5b5b5;background:#fcfcfc"><svg width="44" height="44" viewBox="0 0 44 44"><path d="M22 9v26M9 22h26" stroke="#2f7fe0" stroke-width="1.6"/></svg></div>
<div class="abs" style="left:48px;top:216px;width:69px;height:51px;border:3px solid #f23c3c;box-shadow:1px 3px 4px rgba(0,0,0,.42), inset 1px 3px 4px rgba(0,0,0,.38)"></div>
</div>
<div class="abs" style="left:1091px;top:0;width:6px;height:606px;background:#fff"></div>
<div class="abs" style="left:1091px;top:0;width:1px;height:606px;background:#9a9a9a"></div>
<div class="abs" style="left:1092px;top:0;width:5px;height:115px;background:#0e2a55"></div>
<div class="abs" style="left:1092px;top:0;width:1.5px;height:606px;background:#111"></div>
<div class="abs" style="left:1093px;top:128px;width:4px;height:1px;background:#222"></div>
<div class="abs" style="left:1093px;top:129px;width:4px;height:23px;background:#e4e4e4"></div>
<div class="abs" style="left:1093px;top:152px;width:4px;height:1px;background:#999"></div>
<div class="abs" style="left:1093px;top:153px;width:4px;height:19px;background:#f1f1f1"></div>
<div class="abs" style="left:1093px;top:172px;width:4px;height:1px;background:#333"></div>
<div class="abs" style="left:1093px;top:195px;width:4px;height:1px;background:#999"></div>
<div class="abs" style="left:1093px;top:196px;width:4px;height:32px;background:#e8e8e8"></div>
<svg style="left:0;top:0;pointer-events:none" width="1097" height="606" viewBox="0 0 1097 606"><path d="M20.9 54.7L27.4 50v2.9c5 .3 8.700 3.700 9.800 8.500c-2.600-3.300-5.900-4.700-9.800-4.800v2.900z" fill="#666"/><path d="M82.2 54.7L75.700 50v2.9c-5 .3-8.700 3.700-9.800 8.500c2.600-3.300 5.900-4.700 9.800-4.800v2.900z" fill="#bdbdbd"/><path d="M114 49h11l3.200 3.200V63H114z" fill="#666"/><rect x="116.800" y="49" width="7" height="4.600" fill="#fafafa"/><rect x="118.200" y="49" width="1.700" height="3.300" fill="#666"/><rect x="116.400" y="56.500" width="9.500" height="4.300" fill="#fafafa"/><g fill="none" stroke="#666" stroke-width="1.500"><path d="M162.51 55.40A5.7 5.7 0 0 1 173.03 52.68"/><path d="M173.89 56.00A5.7 5.7 0 0 1 163.37 58.72"/></g><path d="M159.700 56.900l2.800-4.400l2.800 4.400z" fill="#666"/><path d="M176.700 54.500l-2.800 4.400l-2.800-4.400z" fill="#666"/><g fill="none" stroke="#777" stroke-width="1.300"><ellipse cx="212.500" cy="51" rx="6.200" ry="2.400"/><path d="M206.300 51v9c0 1.400 2.700 2.400 6.200 2.400M218.700 51v5"/><path d="M206.300 55.500c0 1.400 2.700 2.400 6.200 2.400"/></g><circle cx="217.200" cy="60.200" r="3.900" fill="#2f80dd"/><path d="M216 58.200v4M218.400 58.200v4" stroke="#fff" stroke-width="1.200"/><path d="M241.500 46v18M1033.500 46v18" stroke="#9a9a9a" stroke-width="1"/><ellipse cx="271.400" cy="51" rx="6.800" ry="2.800" fill="#666"/><path d="M264.600 53.200c1 1.600 3.600 2.400 6.800 2.400s5.800-.8 6.800-2.400v2.600h-5.600v3.200c-3.600.4-7-.6-8-2.200zM264.600 58.200c1.200 1.500 4 2.300 7.200 2.100v1.600c-3.200.2-6.200-.6-7.200-2z" fill="#666"/><path d="M277 56.200v8M273 60.200h8" stroke="#2f80dd" stroke-width="2"/><path d="M289.700 54.300l3.700 3.700l3.700-3.700" fill="none" stroke="#777" stroke-width="1.100"/><path d="M329.500 49.700h-5v11.800h6M329.500 55v-8.300h4.700l3.300 3.500v4" fill="none" stroke="#666" stroke-width="1.200"/><path d="M329.500 48.800l4.500 5.400h-4.500z" fill="#666"/><path d="M336 56v8M332 60h8" stroke="#2f80dd" stroke-width="2"/><path d="M377.500 61.500h-7v-14h6.500l4.500 5v2" fill="none" stroke="#666" stroke-width="1.200"/><path d="M377 47.500l4.500 5H377z" fill="#666"/><path d="M381 56v8M377 60h8" stroke="#2f80dd" stroke-width="2"/><path d="M536 55.200v4.500M540.100 51.100v8.600M544.200 53.100v6.600M548.100 48v6.600" stroke="#666" stroke-width="1.900"/><path d="M551 56v8M547 60h8" stroke="#2f80dd" stroke-width="2"/><rect x="580.100" y="50" width="19.700" height="10.800" rx="1" fill="#7cc322"/><rect x="581.500" y="51.300" width="7.300" height="8.200" fill="#fff"/><path d="M592 54.100h5l-2.500 3.600z" fill="#fff"/><text x="628.500" y="61.300" font-family="Liberation Serif,serif" font-size="19.800" fill="#707070">T</text><rect x="672.500" y="49.500" width="15" height="11" fill="#fff" stroke="#3b8be6" stroke-width="1.100"/><path d="M674.800 58l3-3l1.400 1.300l2.400-2.900l3.400 4.600z" fill="#3b8be6"/><rect x="682" y="52" width="2" height="2" fill="#f0503c"/><path d="M721.600 49.600l-3 2.300l3 2.300M728.100 49.600l3 2.300l-3 2.300" fill="none" stroke="#666" stroke-width="1.200"/><text x="715.800" y="63.200" font-size="5.800" font-weight="bold" letter-spacing=".5" fill="#666">HTML</text><circle cx="902" cy="52.800" r="4.900" fill="#fdfbe6" stroke="#9a9a9a" stroke-width="1.200"/><path d="M899.800 57v3.500c0 .8 .6 1 1.200 1h2c.6 0 1.200-.2 1.200-1V57" fill="#fff" stroke="#9a9a9a" stroke-width="1.200"/><path d="M902 43.300v2.400M896.700 45.300l1.700 1.800M907.300 45.300l-1.700 1.800" stroke="#aaa" stroke-width="1"/><path d="M909.100 57.200v4.600M912.200 58.200v3.600M915.200 54v7.800" stroke="#7a6722" stroke-width="1.800"/><rect x="944.500" y="48.500" width="17.300" height="12.500" fill="#d6e7fb" stroke="#7a7a7a" stroke-width="1.200"/><rect x="947.500" y="50.500" width="6.500" height="4.600" fill="#fff" stroke="#777" stroke-width="1.100"/><rect x="951.800" y="53.700" width="6.500" height="4.500" fill="#fff" stroke="#777" stroke-width="1.100"/><circle cx="944.3" cy="48.3" r="1.600" fill="#fff" stroke="#7a7a7a" stroke-width="1"/><circle cx="961.9" cy="48.3" r="1.600" fill="#fff" stroke="#7a7a7a" stroke-width="1"/><circle cx="944.3" cy="61.2" r="1.600" fill="#fff" stroke="#7a7a7a" stroke-width="1"/><circle cx="961.9" cy="61.2" r="1.600" fill="#fff" stroke="#7a7a7a" stroke-width="1"/><rect x="996.700" y="47.600" width="8.800" height="13.800" fill="#e9e9e9" stroke="#6a6a6a" stroke-width="1.200"/><path d="M991 54.500h5M993.300 52l2.700 2.500l-2.700 2.500M1011.200 54.500h-5M1008.900 52l-2.700 2.500l2.700 2.500" fill="none" stroke="#6a6a6a" stroke-width="1"/><rect x="1057" y="48" width="14" height="9.700" fill="#e8604c"/><path d="M1063.100 57.700h1.800v2.800h2v1.500h-5.800v-1.500h2z" fill="#e8604c"/><path d="M1062.300 50.700l3.900 2.100l-3.900 2.100z" fill="#fff"/><rect x="14" y="82" width="14.200" height="15.200" fill="#fff"/><path d="M16 86.500h1.800M19.300 86.500h6.700M16 89.600h1.800M19.300 89.600h6.700M16 92.700h1.800M19.300 92.700h6.700" stroke="#414448" stroke-width="1.200"/><ellipse cx="21" cy="121.800" rx="7" ry="3.200" fill="#fff"/><path d="M14 124.200c1.200 1.800 3.800 2.600 7 2.600s5.800-.8 7-2.600v2.600c-1.200 1.800-3.800 2.600-7 2.600s-5.800-.8-7-2.600zM14 128.300c1.200 1.800 3.800 2.600 7 2.600s5.800-.8 7-2.600v2.300c-1.200 1.800-3.800 2.700-7 2.700s-5.800-.9-7-2.700z" fill="#fff"/><path d="M15 168.300l1-4l8.300-8.300l3 3l-8.300 8.300zM25.200 155.100l1-1c.5-.5 1.200-.5 1.700 0l1.300 1.300c.5.500.5 1.200 0 1.700l-1 1z" fill="#fff"/><path d="M14.300 191h13.400l-5.200 6.400v7l-3-1.800v-5.200z" fill="#fff"/><path d="M28.06 232.57L28.06 235.43L25.81 235.98L25.80 236.00L27.00 237.98L24.98 240.00L23.00 238.80L22.98 238.81L22.43 241.06L19.57 241.06L19.02 238.81L19.00 238.80L17.02 240.00L15.00 237.98L16.20 236.00L16.19 235.98L13.94 235.43L13.94 232.57L16.19 232.02L16.20 232.00L15.00 230.02L17.02 228.00L19.00 229.20L19.02 229.19L19.57 226.94L22.43 226.94L22.98 229.19L23.00 229.20L24.98 228.00L27.00 230.02L25.80 232.00L25.81 232.02z" fill="#fff"/><circle cx="21" cy="234" r="2.400" fill="#414448"/><path d="M15 273v3M19 268v8M23 270v6M27.100 264v12" stroke="#fff" stroke-width="2.100"/><rect x="49" y="78.300" width="12" height="12.600" fill="#333"/><path d="M51 81.800h1.600M53.800 81.800h5.400M51 84.600h1.600M53.800 84.600h5.400M51 87.400h1.600M53.800 87.400h5.400" stroke="#fff" stroke-width="1.100"/><ellipse cx="229.500" cy="82" rx="5.700" ry="2.500" fill="#333"/><path d="M223.800 84c1 1.400 3.100 2 5.700 2s4.700-.6 5.700-2v2.200c-1 1.400-3.100 2-5.700 2s-4.700-.6-5.700-2zM223.800 87.400c1 1.400 3.100 2 5.700 2s4.700-.6 5.700-2v1.500c-1 1.400-3.100 2-5.700 2s-4.700-.6-5.700-2z" fill="#333"/><path d="M392 89l.8-3.300l6.200-6.200l2.500 2.500l-6.200 6.200zM399.800 78.700l.6-.6c.4-.4 1-.4 1.400 0l1.100 1.100c.4.400.4 1 0 1.400l-.6.600z" fill="#333"/><path d="M465.200 78.800h8.800l-3.300 4.200v5.500l-2.200-1.300v-4.200z" fill="#666"/><path d="M504.80 81.87L504.80 83.93L503.21 84.34L503.21 84.36L504.03 85.77L502.57 87.23L501.16 86.41L501.14 86.41L500.73 88.00L498.67 88.00L498.26 86.41L498.24 86.41L496.83 87.23L495.37 85.77L496.19 84.36L496.19 84.34L494.60 83.93L494.60 81.87L496.19 81.46L496.19 81.44L495.37 80.03L496.83 78.57L498.24 79.39L498.26 79.39L498.67 77.80L500.73 77.80L501.14 79.39L501.16 79.39L502.57 78.57L504.03 80.03L503.21 81.44L503.21 81.46z" fill="#666"/><circle cx="499.7" cy="82.9" r="1.700" fill="#dcdcdc"/><path d="M931 88.500v2.300M934 86v4.800M937 84v6.800M940.200 81.300v9.500" stroke="#333" stroke-width="1.800"/><path d="M397 149.500V141.500h9.500" fill="none" stroke="#a8a8a8" stroke-width="1.100"/><path d="M394.500 149l2.500 2.800l2.500-2.800zM405.600 139l2.800 2.500l-2.800 2.500z" fill="#a8a8a8"/><text x="425.600" y="151.500" font-family="Liberation Serif,serif" font-size="17" fill="#b4b4b4">Σ</text><path d="M462.300 140.300l5.500 4.300l-5 6.200h-3.200l-2.800-2.200z" fill="#fff" stroke="#555" stroke-width="1"/><path d="M462.300 140.300l5.500 4.300l-2.700 3.300l-5.500-4.300z" fill="#555"/><path d="M455.200 152.400h7" stroke="#555" stroke-width="1"/></svg>
</body></html>
